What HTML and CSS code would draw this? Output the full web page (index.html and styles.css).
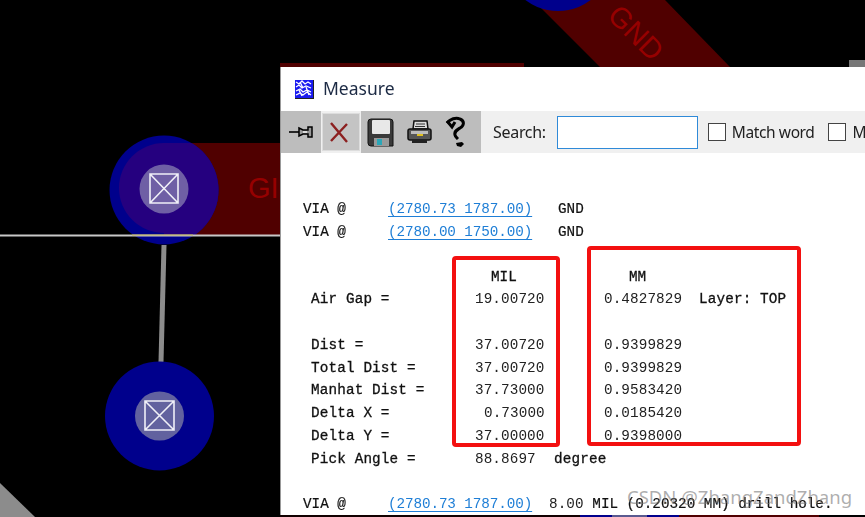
FILE: index.html
```
<!DOCTYPE html>
<html lang="en">
<head>
<meta charset="utf-8">
<title>Measure</title>
<link rel="stylesheet" href="styles.css">
</head>
<body>
<div class="stage">
  <svg class="board" width="865" height="517" viewBox="0 0 865 517">
    <defs><clipPath id="via-clip"><circle cx="164" cy="190" r="54.5"/></clipPath></defs>
    <polygon points="533,0 600,67 730,67 665,0" fill="#500000"/>
    <rect x="164" y="143" width="120" height="92" fill="#500000"/>
    <rect x="280" y="63" width="244" height="4" fill="#500000"/>
    <rect x="849" y="60" width="16" height="7" fill="#777"/>
    <circle cx="558" cy="-43" r="54" fill="#00008c"/>
    <circle cx="164" cy="190" r="54.5" fill="#00008c"/>
    <g clip-path="url(#via-clip)" fill="#25007f">
      <circle cx="164" cy="188" r="45"/>
      <rect x="164" y="143" width="60" height="92"/>
    </g>
    <circle cx="164" cy="189" r="24.5" fill="#6f5fa5"/>
    <path class="mark" d="M150 174h28v29h-28zM150 174l28 29M178 174l-28 29"/>
    <text class="net" x="248" y="198">GI</text>
    <text class="net" transform="translate(606 17) rotate(45)" x="0" y="0">GND</text>
    <rect x="0" y="234.500" width="280" height="2" fill="#c8c8c8"/>
    <rect x="132" y="234.500" width="61" height="1" fill="#c0b050"/>
    <line x1="164" y1="245" x2="161" y2="362" stroke="#8c8c8c" stroke-width="5"/>
    <circle cx="159.500" cy="416" r="54.500" fill="#00008c"/>
    <circle cx="159.500" cy="416" r="24.500" fill="#62629f"/>
    <path class="mark" d="M145 401h29v29h-29zM145 401l29 29M174 401l-29 29"/>
    <polygon points="0,483 35,517 0,517" fill="#8c8c8c"/>
  </svg>

  <section class="window">
    <header class="titlebar">
      <svg class="appicon" width="20" height="20" viewBox="0 0 20 20">
        <rect x="1" y="1" width="18" height="18" fill="#1a1af0"/>
        <path d="M2 3l3 2 3-3 3 3 3-2 3 2M2 8l3-2 3 3 4-2 5 2M2 12l4-2 3 3 4-2 4 2M2 16l4-2 3 2 4-3 4 3M6 3l3 6M12 8l3 8M5 11l3 6" fill="none" stroke="#fff" stroke-width="1.300"/>
        <path d="M1 19.500h19M19.500 1v19" stroke="#222" stroke-width="1"/>
      </svg>
      <h1 class="title">Measure</h1>
    </header>
    <div class="toolbar">
      <div class="tool tool-pin">
        <svg width="24" height="16" viewBox="0 0 24 16"><path d="M0 8h10" stroke="#000" stroke-width="1.600"/><path d="M10 4l4 2h5V3h4v10h-4v-3h-5l-4 2z" fill="#999" stroke="#000" stroke-width="1.500"/><path d="M14 7h4v2h-4z" fill="#ddd"/></svg>
      </div>
      <div class="tool tool-close">
        <svg width="22" height="22" viewBox="0 0 22 22"><path d="M3 2l16 19M19 3L3 20" fill="none" stroke="#8c2020" stroke-width="2.400"/></svg>
      </div>
      <div class="tool tool-group">
        <svg class="ico-save" width="27" height="29" viewBox="0 0 27 29"><path d="M1 4a3 3 0 0 1 3-3h19a3 3 0 0 1 3 3v24H4a3 3 0 0 1-3-3z" fill="#3a3a3a" stroke="#111"/><rect x="5" y="2" width="18" height="14" rx="1" fill="#e8e8e8"/><rect x="7" y="20" width="15" height="8" fill="#999"/><rect x="10" y="21" width="5" height="6" fill="#2aa7b8"/></svg>
        <svg class="ico-print" width="25" height="24" viewBox="0 0 25 24"><path d="M7 1h13l1 8H6z" fill="#ddd" stroke="#111" stroke-width="1.500"/><path d="M9 4h9M8 6.500h10" stroke="#333"/><path d="M3 9h19a2 2 0 0 1 2 2v7a2 2 0 0 1-2 2H3a2 2 0 0 1-2-2v-7a2 2 0 0 1 2-2z" fill="#555" stroke="#111" stroke-width="1.500"/><rect x="4" y="11" width="17" height="3" fill="#bbb"/><rect x="10" y="14" width="6" height="2" fill="#e0c020"/><rect x="5" y="20" width="15" height="3" fill="#222"/></svg>
        <svg class="ico-help" width="22" height="32" viewBox="0 0 22 32"><path d="M2 7c3-4 9-6 13-4 5 2 4 7 0 9-3 2-6 3-5 7 .3 2 2 3 3 4" fill="none" stroke="#000" stroke-width="3"/><path d="M2 5l5 6 3-5" fill="none" stroke="#000" stroke-width="3"/><path d="M11 27l6-1 2 2-3 3-4-1z" fill="#000"/></svg>
      </div>
      <label class="search">Search:<input class="search-input" type="text"></label>
      <label class="check"><span class="box"></span>Match word</label>
      <label class="check"><span class="box"></span>Match case</label>
    </div>
    <div class="report">
      <div class="via-row"><span>VIA @</span><a class="coord">(2780.73 1787.00)</a><span class="net-name">GND</span></div>
      <div class="via-row"><span>VIA @</span><a class="coord">(2780.00 1750.00)</a><span class="net-name">GND</span></div>
      <div class="values">
        <div class="row"><span></span><span class="unit">MIL</span><span class="unit unit-mm">MM</span></div>
        <div class="row"><span class="label">Air Gap =</span><span class="num">19.00720</span><span class="num">0.4827829</span><span class="label">Layer: TOP</span></div>
        <div class="row"></div>
        <div class="row"><span class="label">Dist =</span><span class="num">37.00720</span><span class="num">0.9399829</span></div>
        <div class="row"><span class="label">Total Dist =</span><span class="num">37.00720</span><span class="num">0.9399829</span></div>
        <div class="row"><span class="label">Manhat Dist =</span><span class="num">37.73000</span><span class="num">0.9583420</span></div>
        <div class="row"><span class="label">Delta X =</span><span class="num indent">0.73000</span><span class="num">0.0185420</span></div>
        <div class="row"><span class="label">Delta Y =</span><span class="num">37.00000</span><span class="num">0.9398000</span></div>
        <div class="row"><span class="label">Pick Angle =</span><span class="num">88.8697</span><span class="label deg">degree</span></div>
      </div>
      <div class="via-row last"><span>VIA @</span><a class="coord">(2780.73 1787.00)</a><span class="drill"><span class="num">8.00</span> MIL (0.20320 MM) drill hole.</span></div>
    </div>
  </section>

  <div class="callout callout-mil"></div>
  <div class="callout callout-mm"></div>
  <div class="watermark">CSDN @ZhangZandZhang</div>
  <div class="edge"><span class="e1"></span><span class="e2"></span><span class="e4"></span><span class="e2"></span><span class="e3"></span></div>
</div>
</body>
</html>
```
FILE: styles.css
```
html, body { margin: 0; padding: 0; background: #000; }
.stage { position: relative; width: 865px; height: 517px; overflow: hidden; background: #000; font-family: "Liberation Mono", monospace; }
.board { position: absolute; left: 0; top: 0; }
.mark { fill: none; stroke: #f0f0f8; stroke-width: 1.6; }
.net { font-family: "Liberation Sans", sans-serif; font-size: 29px; fill: #960000; }

.window { position: absolute; left: 280px; top: 67px; width: 585px; height: 448px; background: #fff; border-left: 1px solid #999; box-sizing: border-box; display: flex; flex-direction: column; overflow: hidden; filter: blur(0.35px); }
.titlebar { height: 42px; margin-bottom: 2px; display: flex; align-items: center; gap: 9px; padding-left: 13px; flex: none; }
.appicon { position: relative; top: 1px; }
.title { margin: 0; font: 400 17.500px "Noto Sans", sans-serif; color: #1c2a44; }

.toolbar { height: 42px; background: #f0f0f0; display: flex; align-items: center; flex: none; }
.tool { flex: none; height: 42px; background: #bdbdbd; display: flex; align-items: center; justify-content: center; box-sizing: border-box; }
.tool-pin { width: 40px; }
.tool-close { width: 38px; margin-left: 1px; height: 38px; border: 1px solid #ddd; background: #c4c4c4; padding-right: 4px; }
.tool-group { width: 120px; margin-left: 1px; justify-content: flex-start; gap: 13px; padding-left: 6px; }
.search { flex: none; display: flex; align-items: center; gap: 11px; margin-left: 12px; font: 400 16px "Noto Sans", sans-serif; color: #222; letter-spacing: -0.300px; }
.search-input { width: 141px; height: 33px; box-sizing: border-box; border: 1.500px solid #2f8ad8; background: #fff; padding: 0; margin: 0; }
.check { flex: none; display: flex; align-items: center; gap: 6px; margin-left: 10px; font: 400 15.500px "Noto Sans", sans-serif; color: #222; letter-spacing: -0.400px; white-space: nowrap; }
.check + .check { margin-left: 14px; }
.box { width: 18px; height: 18px; border: 1.500px solid #444; box-sizing: border-box; background: #fff; display: block; }

.report { padding: 44.500px 0 0 22px; font-size: 14.300px; line-height: 23px; color: #111; }
.via-row { display: grid; grid-template-columns: 85px 170px 1fr; height: 23px; -webkit-text-stroke: 0.2px #111; white-space: nowrap; }
.coord { color: #1e7ed6; text-decoration: underline; text-underline-offset: 3px; -webkit-text-stroke: 0; letter-spacing: -0.100px; }
.drill { margin-left: -9px; }
.values { margin-top: 22px; }
.row { display: grid; grid-template-columns: 164px 129px 95px 1fr; height: 22.800px; padding-left: 8px; white-space: nowrap; }
.label { -webkit-text-stroke: 0.3px #111; letter-spacing: 0.150px; }
.num { -webkit-text-stroke: 0; color: #222; font-weight: 400; letter-spacing: 0.100px; }
.indent { margin-left: 9px; }
.unit { margin-left: 16px; -webkit-text-stroke: 0.3px #111; }
.unit-mm { margin-left: 25px; }
.deg { margin-left: -50px; }
.last { margin-top: 22px; }

.callout { position: absolute; border: 4px solid #f31010; border-radius: 4px; box-sizing: border-box; }
.callout-mil { left: 452px; top: 256px; width: 108px; height: 191px; }
.callout-mm { left: 587px; top: 246px; width: 214px; height: 200px; }
.watermark { position: absolute; left: 627px; top: 484px; font: 400 18.500px "Noto Sans", sans-serif; color: rgba(120,120,120,.6); white-space: nowrap; }
.edge { position: absolute; left: 280px; right: 0; top: 515px; height: 2px; display: flex; }
.e1 { width: 300px; background: #100; }
.e2 { width: 32px; background: #00008c; }
.e4 { width: 35px; background: #5a5a90; }
.e3 { width: 140px; background: #500000; }
```
